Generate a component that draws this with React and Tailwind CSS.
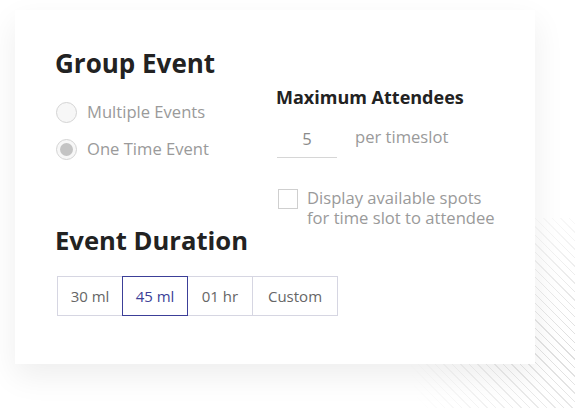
import React from "react";

export default function App() {
  return (
    <div className="relative w-[575px] h-[408px] bg-white overflow-hidden" style={{ fontFamily: '"Open Sans", "Noto Sans", sans-serif' }}>
      <div className="absolute right-0 bottom-0 w-[190px] h-[190px] bg-[repeating-linear-gradient(45deg,#d9d9d9_0px,#d9d9d9_1px,transparent_1px,transparent_6px)] [mask-image:radial-gradient(circle_at_100%_70%,rgba(0,0,0,0.9)_0%,transparent_72%)]" />
      <div className="relative ml-[15px] mt-[10px] w-[520px] h-[354px] bg-white shadow-[0_12px_30px_rgba(0,0,0,0.07)] pl-[40px] pt-[38px]">
        <div className="flex">
          <div className="w-[221px]">
            <h2 className="text-[26px] leading-[30px] font-bold text-[#222]">Group Event</h2>
            <div className="mt-[23px] flex items-center gap-[10px]">
              <span className="ml-[1px] w-[21px] h-[21px] rounded-full border border-[#d4d4d4] bg-[#f7f7f7]" />
              <span className="text-[16.6px] leading-[22px] text-[#9a9a9a]">Multiple Events</span>
            </div>
            <div className="mt-[15px] flex items-center gap-[10px]">
              <span className="ml-[1px] w-[21px] h-[21px] rounded-full border border-[#d4d4d4] bg-[#f7f7f7] flex items-center justify-center">
                <span className="w-[13px] h-[13px] rounded-full bg-[#c4c4c4]" />
              </span>
              <span className="text-[16.6px] leading-[22px] text-[#9a9a9a]">One Time Event</span>
            </div>
          </div>
          <div className="pt-[38px]">
            <h3 className="text-[18px] leading-[22px] font-bold text-[#222]">Maximum Attendees</h3>
            <div className="mt-[20px] flex items-start">
              <div className="w-[60px] ml-[1px] h-[30px] border-b border-[#d6d6d6] text-center text-[16.6px] leading-[22px] text-[#8a8a8a]">5</div>
              <span className="ml-[18px] -mt-[2px] text-[16.6px] leading-[22px] text-[#9a9a9a]">per timeslot</span>
            </div>
            <div className="mt-[30px] flex items-start gap-[9px]">
              <span className="ml-[2px] mt-[1px] w-[20px] h-[20px] border border-[#cfcfcf] bg-white shrink-0" />
              <span className="text-[16.6px] leading-[20px] text-[#9a9a9a]">Display available spots<br />for time slot to attendee</span>
            </div>
          </div>
        </div>
        <h2 className="-mt-[2px] text-[25.6px] leading-[30px] font-bold text-[#222]">Event Duration</h2>
        <div className="mt-[20px] ml-[2px] flex text-[15px]">
          <div className="w-[66px] h-[40px] flex items-center justify-center border border-[#d6d6e2] text-[#666]">30 ml</div>
          <div className="w-[66px] h-[40px] -ml-[1px] flex items-center justify-center border border-[#3c3f98] text-[#3c3f98] relative z-10">45 ml</div>
          <div className="w-[66px] h-[40px] -ml-[1px] flex items-center justify-center border border-[#d6d6e2] text-[#666]">01 hr</div>
          <div className="w-[86px] h-[40px] -ml-[1px] flex items-center justify-center border border-[#d6d6e2] text-[#666]">Custom</div>
        </div>
      </div>
    </div>
  );
}
